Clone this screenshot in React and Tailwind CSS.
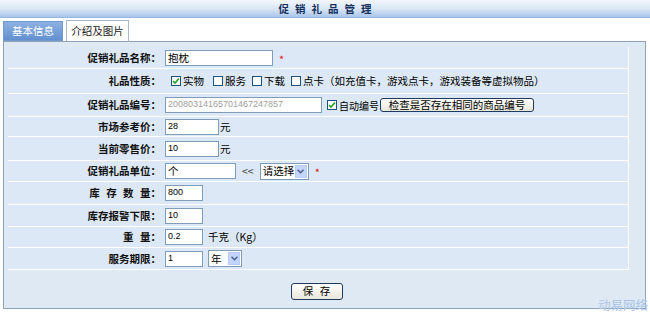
import React from "react";

const font = { fontFamily: '"Noto Sans CJK SC", "Liberation Sans", sans-serif' };

function Check({ checked }) {
  return (
    <span className="inline-flex items-center justify-center w-[10px] h-[10px] border border-[#1c5180] bg-white shrink-0">
      {checked && (
        <svg width="8" height="8" viewBox="0 0 8 8">
          <path d="M1 4 L3 6 L7 1.5" stroke="#21a121" strokeWidth="1.6" fill="none" />
        </svg>
      )}
    </span>
  );
}

function Input({ value, w, gray, cjk }) {
  return (
    <div
      className={`${w} h-[16px] bg-white border border-[#7f9db9] flex items-center pl-[2px] overflow-hidden whitespace-nowrap ${
        gray ? "text-[#a0a0a0]" : "text-black"
      } ${cjk ? "text-[10.5px]" : "text-[9px] font-['Liberation_Sans']"}`}
    >
      {value}
    </div>
  );
}

function Select({ text, w }) {
  return (
    <div className={`${w} h-[17px] bg-white border border-[#7f9db9] flex items-center justify-between pl-[2px] pr-[1px] text-[10.5px] whitespace-nowrap`}>
      <span>{text}</span>
      <span className="w-[12px] h-[13px] shrink-0 bg-[#c3d5fd] border border-[#b9cdf6] flex items-center justify-center">
        <svg width="7" height="5" viewBox="0 0 7 5">
          <path d="M0.5 0.8 L3.5 3.8 L6.5 0.8" stroke="#4d6185" strokeWidth="1.5" fill="none" />
        </svg>
      </span>
    </div>
  );
}

function Row({ h, label, spaced, children }) {
  return (
    <div className={`${h} flex items-center border-b border-white`}>
      <div
        className={`w-[153px] text-right font-bold text-[10.5px] text-[#111] whitespace-pre ${
          spaced ? "[word-spacing:4px]" : ""
        }`}
      >
        {label}
      </div>
      <div className="flex items-center pl-[4px] text-[10.5px] text-black">{children}</div>
    </div>
  );
}

function Req() {
  return <span className="text-[#e02020] text-[11px] ml-[6px] mt-[3px]">*</span>;
}

export default function App() {
  return (
    <div className="w-[650px] h-[313px] bg-white overflow-hidden relative" style={font}>
      {/* title */}
      <div className="h-[18px] bg-gradient-to-b from-[#f3f7fc] via-[#dbe7f6] to-[#aac5ea] border-b border-[#94b6e3] flex items-center justify-center">
        <span className="text-[10.5px] font-bold text-[#15325e] tracking-[6px] pl-[6px]">促销礼品管理</span>
      </div>

      {/* tabs */}
      <div className="flex items-end gap-[3px] pl-[3px] pt-[2px] h-[23px]">
        <div className="w-[60px] h-[20px] bg-gradient-to-b from-[#8db1e1] to-[#6290d0] border border-[#7299cf] text-white text-[10.5px] flex items-center justify-center">
          基本信息
        </div>
        <div className="w-[63px] h-[21px] bg-white border border-b-0 border-[#a9b8cc] text-[#222] text-[10.5px] flex items-center justify-center">
          介绍及图片
        </div>
      </div>

      {/* panel */}
      <div className="ml-[3px] w-[643px] h-[268px] border border-[#8fa2ba] bg-[#dfe9f4] pt-[5px] pl-[4px]">
        <div className="w-[621px] bg-[#dce8f5] border-r border-white">
          <Row h="h-[22px]" label="促销礼品名称：">
            <Input value="抱枕" w="w-[108px]" cjk />
            <Req />
          </Row>
          <Row h="h-[25px]" label="礼品性质：">
            <div className="flex items-center gap-[2px] ml-[6px]">
              <Check checked />
              <span>实物</span>
            </div>
            <div className="flex items-center gap-[2px] ml-[9px]">
              <Check />
              <span>服务</span>
            </div>
            <div className="flex items-center gap-[2px] ml-[6px]">
              <Check />
              <span>下载</span>
            </div>
            <div className="flex items-center gap-[2px] ml-[6px]">
              <Check />
              <span>点卡（如充值卡，游戏点卡，游戏装备等虚拟物品）</span>
            </div>
          </Row>
          <Row h="h-[23px]" label="促销礼品编号：">
            <Input value="20080314165701467247857" w="w-[157px]" gray />
            <div className="flex items-center gap-[2px] ml-[5px] text-[10px]">
              <Check checked />
              <span>自动编号</span>
            </div>
            <button className="ml-[1px] w-[154px] h-[14px] rounded-[3px] border border-[#1f3a5c] bg-gradient-to-b from-white to-[#e8e6da] text-[10.5px] leading-none flex items-center justify-center">
              检查是否存在相同的商品编号
            </button>
          </Row>
          <Row h="h-[20px]" label="市场参考价：">
            <Input value="28" w="w-[54px]" />
            <span className="ml-[1px]">元</span>
          </Row>
          <Row h="h-[24px]" label="当前零售价：">
            <Input value="10" w="w-[54px]" />
            <span className="ml-[1px]">元</span>
          </Row>
          <Row h="h-[21px]" label="促销礼品单位：">
            <Input value="个" w="w-[71px]" cjk />
            <span className="ml-[6px] mr-[6px] text-[#333]">&lt;&lt;</span>
            <Select text="请选择" w="w-[49px]" />
            <Req />
          </Row>
          <Row h="h-[23px]" label="库 存 数 量：" spaced>
            <Input value="800" w="w-[38px]" />
          </Row>
          <Row h="h-[22px]" label="库存报警下限：">
            <Input value="10" w="w-[38px]" />
          </Row>
          <Row h="h-[21px]" label="重 量：" spaced>
            <Input value="0.2" w="w-[38px]" />
            <span className="ml-[5px]">千克（Kg）</span>
          </Row>
          <Row h="h-[22px]" label="服务期限：">
            <Input value="1" w="w-[38px]" />
            <div className="ml-[5px]">
              <Select text="年" w="w-[34px]" />
            </div>
          </Row>
        </div>
        <div className="flex justify-center mt-[13px] pr-[20px]">
          <button className="w-[52px] h-[17px] rounded-[3px] border border-[#1f3a5c] bg-gradient-to-b from-white to-[#e8e6da] text-[10.5px] leading-none flex items-center justify-center [word-spacing:4px]">
            保 存
          </button>
        </div>
      </div>

      <div className="absolute right-[2px] bottom-[2px] text-[12.5px] text-[#a8c5e6] leading-none">动易网络</div>
    </div>
  );
}
